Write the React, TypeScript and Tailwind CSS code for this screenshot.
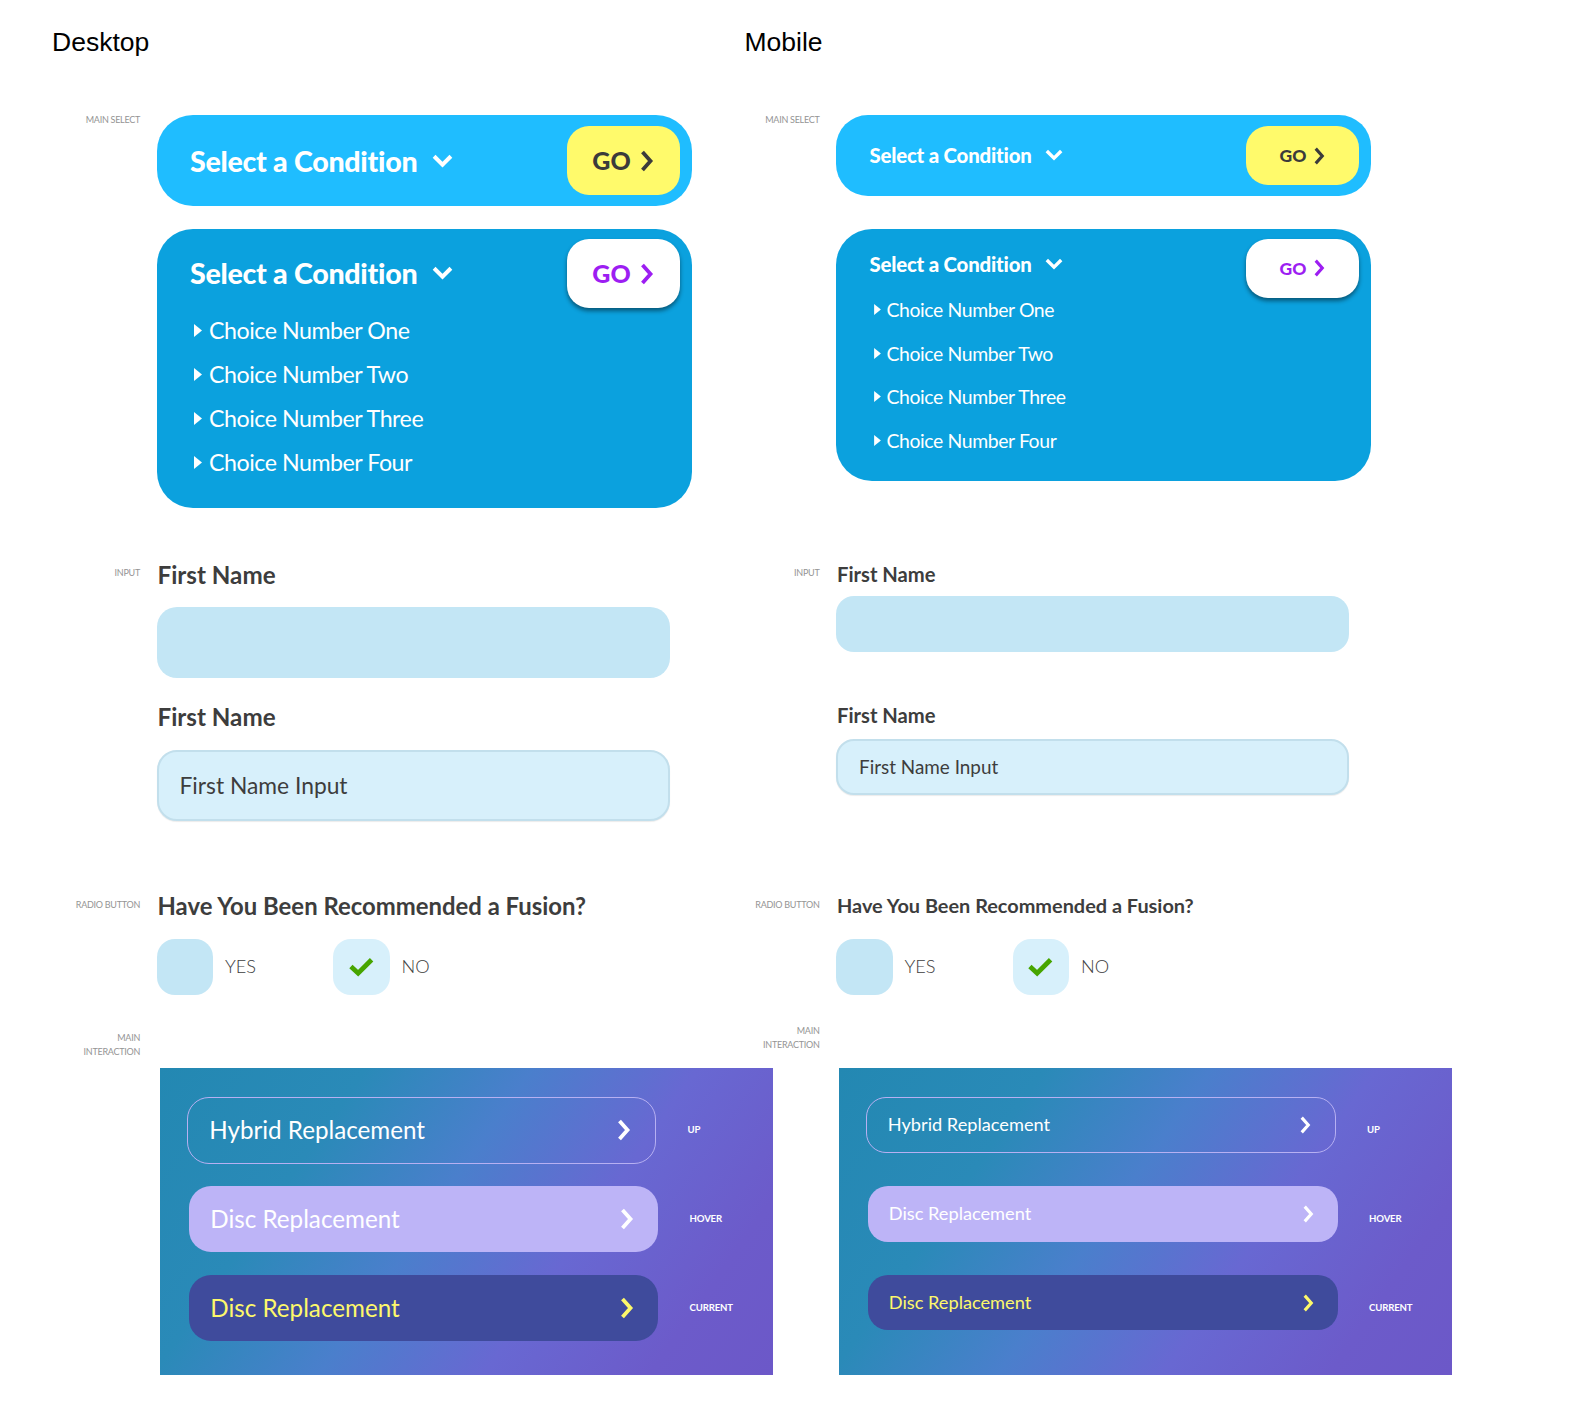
import React from 'react';

const SANS = "font-['Lato','Noto_Sans',sans-serif]";

type V = {
  closedH: string;
  title: string;
  goH: string;
  goText: string;
  openMt: string;
  openH: string;
  openLeftPt: string;
  choicesMt: string;
  choice: string;
  tri: string;
  inputSecMt: string;
  inputLabelMt: string;
  inputHead: string;
  input1Mt: string;
  input1H: string;
  head2Mt: string;
  input2Mt: string;
  input2H: string;
  inputText: string;
  radioSecMt: string;
  radioLabelMt: string;
  radioHead: string;
  boxesMt: string;
  interSecMt: string;
  panelPt: string;
  btnH: string;
  btnText: string;
  btnPl: string;
  chev: string;
  goChevron: string;
  titleChevron: string;
};

const desktop: V = {
  closedH: 'h-[91px] rounded-[36px]',
  title: 'text-[28.6px] leading-[34px]',
  goH: 'h-[69px]',
  goText: 'text-[25px] gap-[8px]',
  openMt: 'mt-[23px]',
  openH: 'h-[279px]',
  openLeftPt: 'pt-[17px]',
  choicesMt: 'mt-[19px]',
  choice: 'text-[23.2px] tracking-[-0.02em] h-[43.75px]',
  tri: 'w-[8px] h-[13px] mr-[7px] ml-[4px]',
  inputSecMt: 'mt-[53px]',
  inputLabelMt: 'mt-[5px]',
  inputHead: 'text-[24.2px] leading-[28.3px]',
  input1Mt: 'mt-[18.2px]',
  input1H: 'h-[70.7px] rounded-[20px]',
  head2Mt: 'mt-[25.2px]',
  input2Mt: 'mt-[18.2px]',
  input2H: 'h-[70.7px] rounded-[20px]',
  inputText: 'text-[22.8px] pl-[21px]',
  radioSecMt: 'mt-[71.6px]',
  radioLabelMt: 'mt-[6px]',
  radioHead: 'text-[23.9px] leading-[28.3px]',
  boxesMt: 'mt-[18.1px]',
  interSecMt: 'mt-[36.4px]',
  panelPt: 'pt-[36.4px]',
  btnH: 'h-[66.6px] rounded-[22px]',
  btnText: 'text-[24.2px]',
  btnPl: 'pl-[21.5px] pr-[24px]',
  chev: 'w-[15px] h-[22px]',
  goChevron: 'w-[15px] h-[22px]',
  titleChevron: 'w-[21px] h-[14px] ml-[15px]',
};

const mobile: V = {
  closedH: 'h-[81px] rounded-[32px]',
  title: 'text-[20.4px] leading-[28.3px]',
  goH: 'h-[58.5px]',
  goText: 'text-[17.5px] gap-[7px]',
  openMt: 'mt-[33px]',
  openH: 'h-[252.4px]',
  openLeftPt: 'pt-[11.1px]',
  choicesMt: 'mt-[9.1px]',
  choice: 'text-[19.4px] tracking-[-0.02em] h-[43.75px]',
  tri: 'w-[7px] h-[11px] mr-[6px] ml-[4px]',
  inputSecMt: 'mt-[80.7px]',
  inputLabelMt: 'mt-[4px]',
  inputHead: 'text-[20.2px] leading-[24.2px]',
  input1Mt: 'mt-[10.2px]',
  input1H: 'h-[55.5px] rounded-[18px]',
  head2Mt: 'mt-[51.5px]',
  input2Mt: 'mt-[11.1px]',
  input2H: 'h-[56.5px] rounded-[18px]',
  inputText: 'text-[18.9px] pl-[21px]',
  radioSecMt: 'mt-[98px]',
  radioLabelMt: 'mt-[5px]',
  radioHead: 'text-[19.9px] leading-[24.2px]',
  boxesMt: 'mt-[21.2px]',
  interSecMt: 'mt-[29.3px]',
  panelPt: 'pt-[43.5px]',
  btnH: 'h-[55.5px] rounded-[20px]',
  btnText: 'text-[18.2px]',
  btnPl: 'pl-[20.5px] pr-[24px]',
  chev: 'w-[12px] h-[18px]',
  goChevron: 'w-[12px] h-[18px]',
  titleChevron: 'w-[18px] h-[12px] ml-[13px]',
};

function ChevronDown({ className }: { className: string }) {
  return (
    <svg viewBox="0 0 20 13" className={className} fill="none" stroke="currentColor" strokeWidth={3.8}>
      <polyline points="2,2 10,10 18,2" />
    </svg>
  );
}

function ChevronRight({ className }: { className: string }) {
  return (
    <svg viewBox="0 0 14 22" className={className} fill="none" stroke="currentColor" strokeWidth={3.8}>
      <polyline points="3,2 11,11 3,20" />
    </svg>
  );
}

function Triangle({ className }: { className: string }) {
  return (
    <svg viewBox="0 0 8 13" className={className} fill="currentColor">
      <polygon points="0,0 8,6.5 0,13" />
    </svg>
  );
}

function Check() {
  return (
    <svg viewBox="0 0 26 20" className="w-[25px] h-[20px]" fill="none" stroke="#47a500" strokeWidth={5}>
      <polyline points="2,9.5 9.5,16.5 23.5,2.5" />
    </svg>
  );
}

function SideLabel({ children, className = '' }: { children: React.ReactNode; className?: string }) {
  return (
    <div
      className={`w-[88px] shrink-0 text-right text-[9px] leading-[14px] uppercase tracking-[-0.03em] text-[#949494] ${SANS} ${className}`}
    >
      {children}
    </div>
  );
}

function GoButton({ v, open }: { v: V; open: boolean }) {
  return (
    <div
      className={`w-[113px] ${v.goH} rounded-[22px] flex items-center justify-center shrink-0 font-black ${v.goText} ${
        open ? 'bg-white text-[#9d1ef2] shadow-[0_3px_4px_rgba(0,0,0,0.45)]' : 'bg-[#fffa6b] text-[#3b3b3b]'
      }`}
    >
      <span className="leading-none">GO</span>
      <ChevronRight className={v.goChevron} />
    </div>
  );
}

function Title({ v }: { v: V }) {
  return (
    <div className={`flex items-center text-white font-black tracking-[-0.01em] ${v.title}`}>
      <span>Select a Condition</span>
      <ChevronDown className={v.titleChevron} />
    </div>
  );
}

const choices = ['Choice Number One', 'Choice Number Two', 'Choice Number Three', 'Choice Number Four'];

const buttons = [
  { t: 'Hybrid Replacement', s: 'UP', cls: 'border border-[#b7b0f2] text-white ml-[27.3px]', c: 'text-white' },
  { t: 'Disc Replacement', s: 'HOVER', cls: 'bg-[#bdb4f7] text-white ml-[29.3px]', c: 'text-white' },
  { t: 'Disc Replacement', s: 'CURRENT', cls: 'bg-[#3f4b9c] text-[#fdf86b] ml-[29.3px]', c: 'text-[#fdf86b]' },
];

function Column({ v, name, headClass }: { v: V; name: string; headClass: string }) {
  return (
    <div className={`w-[679.5px] shrink-0 flex flex-col ${SANS}`}>
      <h1 className={`font-['Liberation_Sans',Arial,sans-serif] text-[26.5px] leading-[30px] text-black ${headClass}`}>{name}</h1>

      {/* main select */}
      <div className="flex mt-[58px]">
        <SideLabel className="-mt-[2px]">Main Select</SideLabel>
        <div className="ml-[16.5px] w-[535px]">
          <div className={`${v.closedH} bg-[#1fbdff] flex items-center justify-between pl-[33.5px] pr-[12px]`}>
            <Title v={v} />
            <GoButton v={v} open={false} />
          </div>
          <div className={`${v.openMt} ${v.openH} rounded-[36px] bg-[#0ba1de] flex justify-between pt-[10px] pr-[12px] pl-[33.5px]`}>
            <div className={v.openLeftPt}>
              <Title v={v} />
              <ul className={v.choicesMt}>
                {choices.map((c) => (
                  <li key={c} className={`flex items-center text-white font-normal ${v.choice}`}>
                    <Triangle className={v.tri} />
                    <span>{c}</span>
                  </li>
                ))}
              </ul>
            </div>
            <GoButton v={v} open />
          </div>
        </div>
      </div>

      {/* input */}
      <div className={`flex ${v.inputSecMt}`}>
        <SideLabel className={v.inputLabelMt}>Input</SideLabel>
        <div className="ml-[16.5px] w-[513px]">
          <div className={`pl-[1px] font-bold text-[#3d3d3d] ${v.inputHead}`}>First Name</div>
          <div className={`${v.input1Mt} ${v.input1H} bg-[#c3e6f5]`} />
          <div className={`${v.head2Mt} pl-[1px] font-bold text-[#3d3d3d] ${v.inputHead}`}>First Name</div>
          <div
            className={`${v.input2Mt} ${v.input2H} bg-[#d7f0fb] border-2 border-[#c2dfec] shadow-[0_1px_1px_rgba(0,0,0,0.08)] flex items-center ${v.inputText} text-[#3d3d3d]`}
          >
            First Name Input
          </div>
        </div>
      </div>

      {/* radio */}
      <div className={`flex ${v.radioSecMt}`}>
        <SideLabel className={v.radioLabelMt}>Radio Button</SideLabel>
        <div className="ml-[16.5px]">
          <div className={`pl-[1px] font-bold text-[#3d3d3d] ${v.radioHead}`}>Have You Been Recommended a Fusion?</div>
          <div className={`${v.boxesMt} flex items-center`}>
            <div className="w-[56.5px] h-[56.5px] rounded-[18px] bg-[#c3e6f5]" />
            <span className="ml-[12px] w-[108px] text-[18.2px] font-light text-[#3d3d3d]">YES</span>
            <div className="w-[56.5px] h-[56.5px] rounded-[18px] bg-[#d7f0fb] flex items-center justify-center">
              <Check />
            </div>
            <span className="ml-[12px] text-[18.2px] font-light text-[#3d3d3d]">NO</span>
          </div>
        </div>
      </div>

      {/* main interaction */}
      <div className={`flex ${v.interSecMt}`}>
        <SideLabel>
          Main
          <br />
          Interaction
        </SideLabel>
        <div className={`ml-[16.5px] pl-[3px] ${v.panelPt}`}>
          <div className="w-[613px] h-[307px] bg-[linear-gradient(125deg,#2388b2_0%,#2a8ab8_25%,#4a7fcc_45%,#6868d2_65%,#6c5bca_85%,#6c58c8_100%)] pt-[29.3px] flex flex-col gap-[22.2px]">
            {buttons.map((b) => (
              <div key={b.s} className="h-[66.6px] flex items-start">
                <div className={`w-[469.5px] ${v.btnH} ${b.cls} ${v.btnPl} flex items-center justify-between ${v.btnText}`}>
                  <span>{b.t}</span>
                  <ChevronRight className={`${v.chev} ${b.c}`} />
                </div>
                <div className="self-center ml-[31.3px] text-[9.6px] font-bold text-white tracking-[-0.02em]">{b.s}</div>
              </div>
            ))}
          </div>
        </div>
      </div>
    </div>
  );
}

export default function App() {
  return (
    <div className="w-full bg-white flex pl-[52px] pt-[27px] pb-[40px]">
      <Column v={desktop} name="Desktop" headClass="" />
      <Column v={mobile} name="Mobile" headClass="ml-[13px]" />
    </div>
  );
}
